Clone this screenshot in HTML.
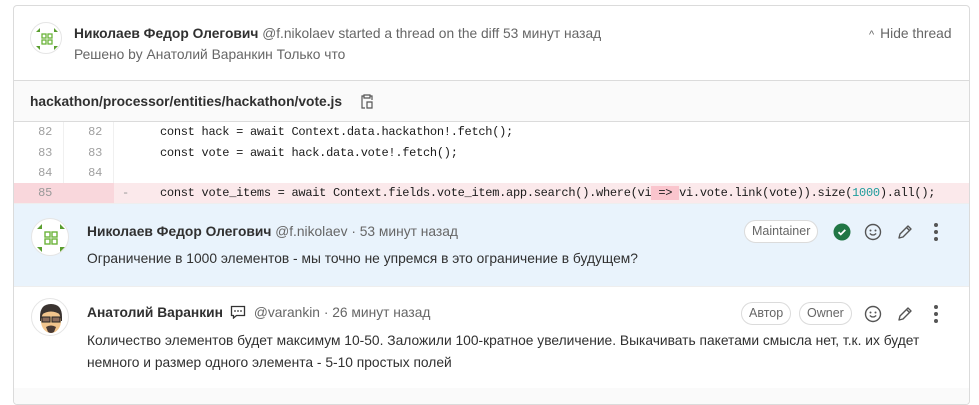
<!DOCTYPE html>
<html><head><meta charset="utf-8"><style>
*{box-sizing:border-box;margin:0;padding:0}
body{width:979px;height:400px;overflow:hidden;background:#fff;font-family:"Liberation Sans","Noto Sans CJK SC",sans-serif;font-size:13.8px;color:#303030;position:relative}
.card{position:absolute;left:13px;top:5px;width:957px;height:400px;border:1px solid #dbdbdb;border-radius:4px;overflow:hidden}
.abs{position:absolute}
.hdr{left:0;top:0;width:955px;height:75px;border-bottom:1px solid #dbdbdb}
.av{border-radius:50%;border:1px solid #e5e5e5;background:#fff;overflow:hidden}
.name{font-weight:bold;color:#303030}
.muted{color:#666}
.fh{left:0;top:75px;width:955px;height:41px;background:#fafafa;border-bottom:1px solid #dbdbdb;font-weight:bold;font-size:13.8px;padding:13px 0 0 16px}
.code{font-family:"Liberation Mono",monospace;font-size:12px;letter-spacing:-0.28px;color:#1a1a1a}
.ln{position:absolute;top:116px;width:955px;height:20.5px}
.ln span{position:absolute;top:3px}
.n1{left:0;width:50px;text-align:right;padding-right:12px;color:#a0a0a0}
.n2{left:50px;width:50px;text-align:right;padding-right:12px;color:#a0a0a0}
.c1{position:absolute;left:0;top:0;width:50px;height:100%;border-right:1px solid #f0f0f0}
.c2{position:absolute;left:50px;top:0;width:50px;height:100%;border-right:1px solid #f0f0f0}
.badge{position:absolute;border:1px solid #dbdbdb;border-radius:12px;font-size:12.5px;color:#666;height:23px;line-height:21px;padding:0 7px;background:#fff}
</style></head><body>
<div class="card">
 <div class="abs hdr">
  <div class="abs av" style="left:16px;top:16px;width:32px;height:32px">
   <svg width="32" height="32" viewBox="0 0 32 32"><path d="M5 9 L9 5 L9 9Z M27 9 L23 5 L23 9Z M5 23 L9 27 L9 23Z M27 23 L23 27 L23 23Z" fill="#5a9e2f"/><g fill="none" stroke="#6bb33a" stroke-width="1.3"><rect x="11" y="11" width="4" height="4"/><rect x="17" y="11" width="4" height="4"/><rect x="11" y="17" width="4" height="4"/><rect x="17" y="17" width="4" height="4"/></g></svg>
  </div>
  <div class="abs" style="left:60px;top:20px;white-space:nowrap"><span class="name">Николаев Федор Олегович</span> <span class="muted">@f.nikolaev started a thread on the diff 53 минут назад</span></div>
  <div class="abs muted" style="left:60px;top:41px">Решено by Анатолий Варанкин Только что</div>
  <div class="abs muted" style="left:855px;top:20px"><span style="font-size:11px;margin-right:6px">^</span>Hide thread</div>
 </div>
 <div class="abs fh">hackathon/processor/entities/hackathon/vote.js
  <svg style="position:absolute;left:347px;top:13px" width="12" height="15" viewBox="0 0 12 15"><path d="M3 2H1v12h3M9 2h2v4M3 1h6v3H3z M6 8h5v6H6z" fill="none" stroke="#555" stroke-width="1.2"/></svg></div>
 <div class="code">
  <div class="ln" style="top:116px"><div class="c1"></div><div class="c2"></div><span class="n1">82</span><span class="n2">82</span><span style="left:146px">const hack = await Context.data.hackathon!.fetch();</span></div>
  <div class="ln" style="top:136.5px"><div class="c1"></div><div class="c2"></div><span class="n1">83</span><span class="n2">83</span><span style="left:146px">const vote = await hack.data.vote!.fetch();</span></div>
  <div class="ln" style="top:157px"><div class="c1"></div><div class="c2"></div><span class="n1">84</span><span class="n2">84</span></div>
  <div class="ln" style="top:177px;background:#fbe9eb;border-bottom:1px solid #eee"><div class="c1" style="background:#f9d7dc;border:0"></div><div class="c2" style="background:#f9d7dc;border:0"></div><span class="n1" style="color:#999">85</span><span style="left:108px;color:#999">-</span><span style="left:146px;white-space:pre">const vote_items = await Context.fields.vote_item.app.search().where(vi<span style="position:static;background:#fac5cd"> =&gt; </span>vi.vote.link(vote)).size(<span style="position:static;color:#1f9c9c">1000</span>).all();</span></div>
 </div>
 <div class="abs" style="left:0;top:198px;width:955px;height:82px;background:#e9f3fc">
  <div class="abs av" style="left:17px;top:14px;width:38px;height:38px">
   <svg width="38" height="38" viewBox="0 0 38 38"><path d="M5 10 L10 5 L10 10Z M33 10 L28 5 L28 10Z M5 28 L10 33 L10 28Z M33 28 L28 33 L28 28Z" fill="#5a9e2f"/><g fill="none" stroke="#6bb33a" stroke-width="1.4"><rect x="13" y="13" width="5" height="5"/><rect x="20" y="13" width="5" height="5"/><rect x="13" y="20" width="5" height="5"/><rect x="20" y="20" width="5" height="5"/></g></svg>
  </div>
  <div class="abs" style="left:73px;top:20px;white-space:nowrap"><span class="name">Николаев Федор Олегович</span> <span class="muted">@f.nikolaev · 53 минут назад</span></div>
  <div class="abs" style="left:73px;top:47px">Ограничение в 1000 элементов - мы точно не упремся в это ограничение в будущем?</div>
  <div class="badge" style="left:730px;top:16px">Maintainer</div>
  <svg class="abs" style="left:819px;top:19px" width="18" height="18" viewBox="0 0 18 18"><circle cx="9" cy="9" r="8.5" fill="#217645"/><path d="M5.5 9.2l2.3 2.2 4.5-4.5" fill="none" stroke="#fff" stroke-width="1.8"/></svg>
  <svg class="abs" style="left:850px;top:19px" width="18" height="18" viewBox="0 0 18 18"><circle cx="9" cy="9" r="7.5" fill="none" stroke="#555" stroke-width="1.4"/><circle cx="6.5" cy="7.5" r="1" fill="#555"/><circle cx="11.5" cy="7.5" r="1" fill="#555"/><path d="M5.8 10.5q3.2 3 6.4 0" fill="none" stroke="#555" stroke-width="1.3"/></svg>
  <svg class="abs" style="left:882px;top:19px" width="18" height="18" viewBox="0 0 18 18"><path d="M3 15l1-4 8-8 3 3-8 8z M10.5 4.5l3 3" fill="none" stroke="#555" stroke-width="1.4" stroke-linejoin="round"/></svg>
  <svg class="abs" style="left:919px;top:18px" width="6" height="20" viewBox="0 0 6 20"><circle cx="3" cy="3" r="2" fill="#555"/><circle cx="3" cy="10" r="2" fill="#555"/><circle cx="3" cy="17" r="2" fill="#555"/></svg>
 </div>
 <div class="abs" style="left:0;top:280px;width:955px;height:102px;border-top:1px solid #eee">
  <div class="abs av" style="left:17px;top:11px;width:38px;height:38px;background:#fff">
   <svg width="38" height="38" viewBox="0 0 38 38"><path d="M8 18 Q8 5 19 5 Q30 5 30 18 L30 22 L8 22Z" fill="#3a3330"/><ellipse cx="19" cy="22" rx="10" ry="12" fill="#f2c58d"/><path d="M9 16 Q19 9 29 16 L29 12 Q19 3 9 12Z" fill="#3a3330"/><rect x="10" y="18" width="8" height="5" fill="#8a6b5a" stroke="#222" stroke-width="1"/><rect x="20" y="18" width="8" height="5" fill="#8a6b5a" stroke="#222" stroke-width="1"/><path d="M14 28 Q19 25 24 28 L22 33 Q19 35 16 33Z" fill="#4a3a33"/></svg>
  </div>
  <div class="abs" style="left:73px;top:18px;white-space:nowrap"><span class="name">Анатолий Варанкин</span>
   <svg style="vertical-align:-2px;margin:0 8px 0 3px" width="16" height="14" viewBox="0 0 16 14"><path d="M1.5 1.5h13v9h-8l-3 2.5v-2.5h-2z" fill="none" stroke="#333" stroke-width="1.3"/><circle cx="5" cy="6" r="0.9" fill="#333"/><circle cx="8" cy="6" r="0.9" fill="#333"/><circle cx="11" cy="6" r="0.9" fill="#333"/></svg><span class="muted">@varankin · 26 минут назад</span></div>
  <div class="abs" style="left:73px;top:46px;white-space:nowrap">Количество элементов будет максимум 10-50. Заложили 100-кратное увеличение. Выкачивать пакетами смысла нет, т.к. их будет</div>
  <div class="abs" style="left:73px;top:68px">немного и размер одного элемента - 5-10 простых полей</div>
  <div class="badge" style="left:727px;top:15px">Автор</div>
  <div class="badge" style="left:785px;top:15px">Owner</div>
  <svg class="abs" style="left:850px;top:18px" width="18" height="18" viewBox="0 0 18 18"><circle cx="9" cy="9" r="7.5" fill="none" stroke="#555" stroke-width="1.4"/><circle cx="6.5" cy="7.5" r="1" fill="#555"/><circle cx="11.5" cy="7.5" r="1" fill="#555"/><path d="M5.8 10.5q3.2 3 6.4 0" fill="none" stroke="#555" stroke-width="1.3"/></svg>
  <svg class="abs" style="left:882px;top:18px" width="18" height="18" viewBox="0 0 18 18"><path d="M3 15l1-4 8-8 3 3-8 8z M10.5 4.5l3 3" fill="none" stroke="#555" stroke-width="1.4" stroke-linejoin="round"/></svg>
  <svg class="abs" style="left:919px;top:17px" width="6" height="20" viewBox="0 0 6 20"><circle cx="3" cy="3" r="2" fill="#555"/><circle cx="3" cy="10" r="2" fill="#555"/><circle cx="3" cy="17" r="2" fill="#555"/></svg>
 </div>
 <div class="abs" style="left:0;top:382px;width:955px;height:20px;background:#fafafa"></div>
</div>
</body></html>
